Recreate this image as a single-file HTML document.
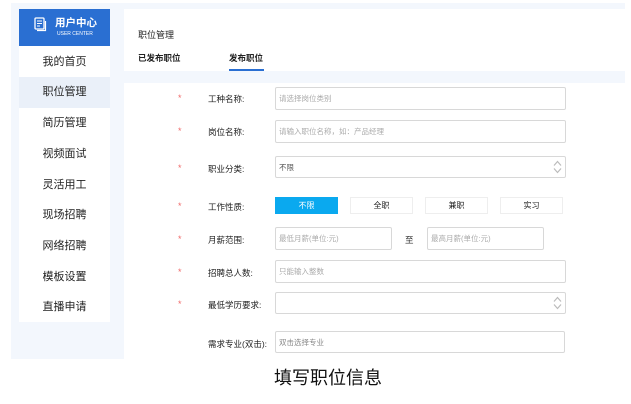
<!DOCTYPE html>
<html><head><meta charset="utf-8"><style>
*{margin:0;padding:0;box-sizing:border-box}
body{width:631px;height:404px;background:#fff;font-family:"Liberation Sans","Noto Sans CJK SC",sans-serif;position:relative;overflow:hidden;color:#333}
.a{position:absolute}
.bg{left:11px;top:3px;width:614px;height:356px;background:#f3f7fd}
.side{left:19px;top:9px;width:91px;height:313px;background:#fff}
.hd{left:19px;top:9px;width:91px;height:37px;background:#2a6fd2;color:#fff}
.mi{position:absolute;left:19px;width:91px;height:31px;line-height:31px;text-align:center;font-size:11px;color:#222}
.top{left:124px;top:9px;width:501px;height:62px;background:#fff}
.form{left:124px;top:83px;width:501px;height:276px;background:#fff}
.star{position:absolute;left:178px;color:#f06a6a;font-size:9px}
.lb{position:absolute;left:208px;font-size:8.5px;color:#222}
.in{position:absolute;border:1px solid #d8d8d8;border-radius:2px;background:#fff;font-size:7.5px;color:#aaa;padding-left:3px;display:flex;align-items:center}
.btn{position:absolute;top:197px;width:63px;height:17px;border:1px solid #eee;font-size:8px;text-align:center;line-height:15px;color:#222}
.arr{position:absolute;right:3px;top:50%;transform:translateY(-50%)}
</style></head><body>
<div class="a bg"></div>
<div class="a side"></div>
<div class="a hd">
<svg class="a" style="left:15px;top:8px" width="13" height="15" viewBox="0 0 13 15"><rect x="1" y="1" width="9" height="11" rx="1" fill="none" stroke="#fff" stroke-width="1.3"/><path d="M3 4h5M3 6.5h5M3 9h3" stroke="#fff" stroke-width="1"/><path d="M11.5 4v9.5H3" fill="none" stroke="#fff" stroke-width="1.2"/></svg>
<div class="a" style="left:36px;top:6px;font-size:10.5px;font-weight:bold">用户中心</div>
<div class="a" style="left:38px;top:22px;font-size:5px">USER CENTER</div>
</div>
<div class="mi" style="top:47px">我的首页</div>
<div class="mi" style="top:77px;background:#eaf0f9">职位管理</div>
<div class="mi" style="top:108px">简历管理</div>
<div class="mi" style="top:139px">视频面试</div>
<div class="mi" style="top:170px">灵活用工</div>
<div class="mi" style="top:200px">现场招聘</div>
<div class="mi" style="top:231px">网络招聘</div>
<div class="mi" style="top:262px">模板设置</div>
<div class="mi" style="top:292px">直播申请</div>
<div class="a top"></div>
<div class="a" style="left:138px;top:28px;font-size:9px;color:#222">职位管理</div>
<div class="a" style="left:138px;top:52px;font-size:8.5px;font-weight:bold;color:#222">已发布职位</div>
<div class="a" style="left:229px;top:52px;font-size:8.5px;font-weight:bold;color:#222">发布职位</div>
<div class="a" style="left:229px;top:69px;width:35px;height:2px;background:#2a6fd2"></div>
<div class="a form"></div>

<div class="star" style="top:93px">*</div><div class="lb" style="top:93px">工种名称:</div>
<div class="in" style="left:275px;top:87px;width:291px;height:23px">请选择岗位类别</div>
<div class="star" style="top:126px">*</div><div class="lb" style="top:126px">岗位名称:</div>
<div class="in" style="left:275px;top:120px;width:291px;height:23px">请输入职位名称，如：产品经理</div>
<div class="star" style="top:163px">*</div><div class="lb" style="top:163px">职业分类:</div>
<div class="in" style="left:275px;top:156px;width:291px;height:22px;color:#555;align-items:flex-start;padding-top:5px">不限<svg class="arr" width="9" height="13" viewBox="0 0 9 13"><path d="M1 5l3.5-4 3.5 4M1 8l3.5 4 3.5-4" fill="none" stroke="#bbb" stroke-width="1.2"/></svg></div>
<div class="star" style="top:201px">*</div><div class="lb" style="top:201px">工作性质:</div>
<div class="btn" style="left:275px;background:#0aa9ef;border-color:#0aa9ef;color:#fff">不限</div>
<div class="btn" style="left:350px">全职</div>
<div class="btn" style="left:425px">兼职</div>
<div class="btn" style="left:500px">实习</div>
<div class="star" style="top:234px">*</div><div class="lb" style="top:234px">月薪范围:</div>
<div class="in" style="left:275px;top:227px;width:117px;height:23px">最低月薪(单位:元)</div>
<div class="a" style="left:405px;top:234px;font-size:8.5px">至</div>
<div class="in" style="left:427px;top:227px;width:117px;height:23px">最高月薪(单位:元)</div>
<div class="star" style="top:267px">*</div><div class="lb" style="top:267px">招聘总人数:</div>
<div class="in" style="left:275px;top:260px;width:291px;height:23px">只能输入整数</div>
<div class="star" style="top:299px">*</div><div class="lb" style="top:299px">最低学历要求:</div>
<div class="in" style="left:275px;top:292px;width:291px;height:22px"><svg class="arr" width="9" height="13" viewBox="0 0 9 13"><path d="M1 5l3.5-4 3.5 4M1 8l3.5 4 3.5-4" fill="none" stroke="#bbb" stroke-width="1.2"/></svg></div>
<div class="lb" style="top:338px">需求专业(双击):</div>
<div class="in" style="left:275px;top:331px;width:290px;height:22px;color:#888">双击选择专业</div>
<div class="a" style="left:274px;top:364px;font-size:18px;color:#111">填写职位信息</div>
</body></html>
